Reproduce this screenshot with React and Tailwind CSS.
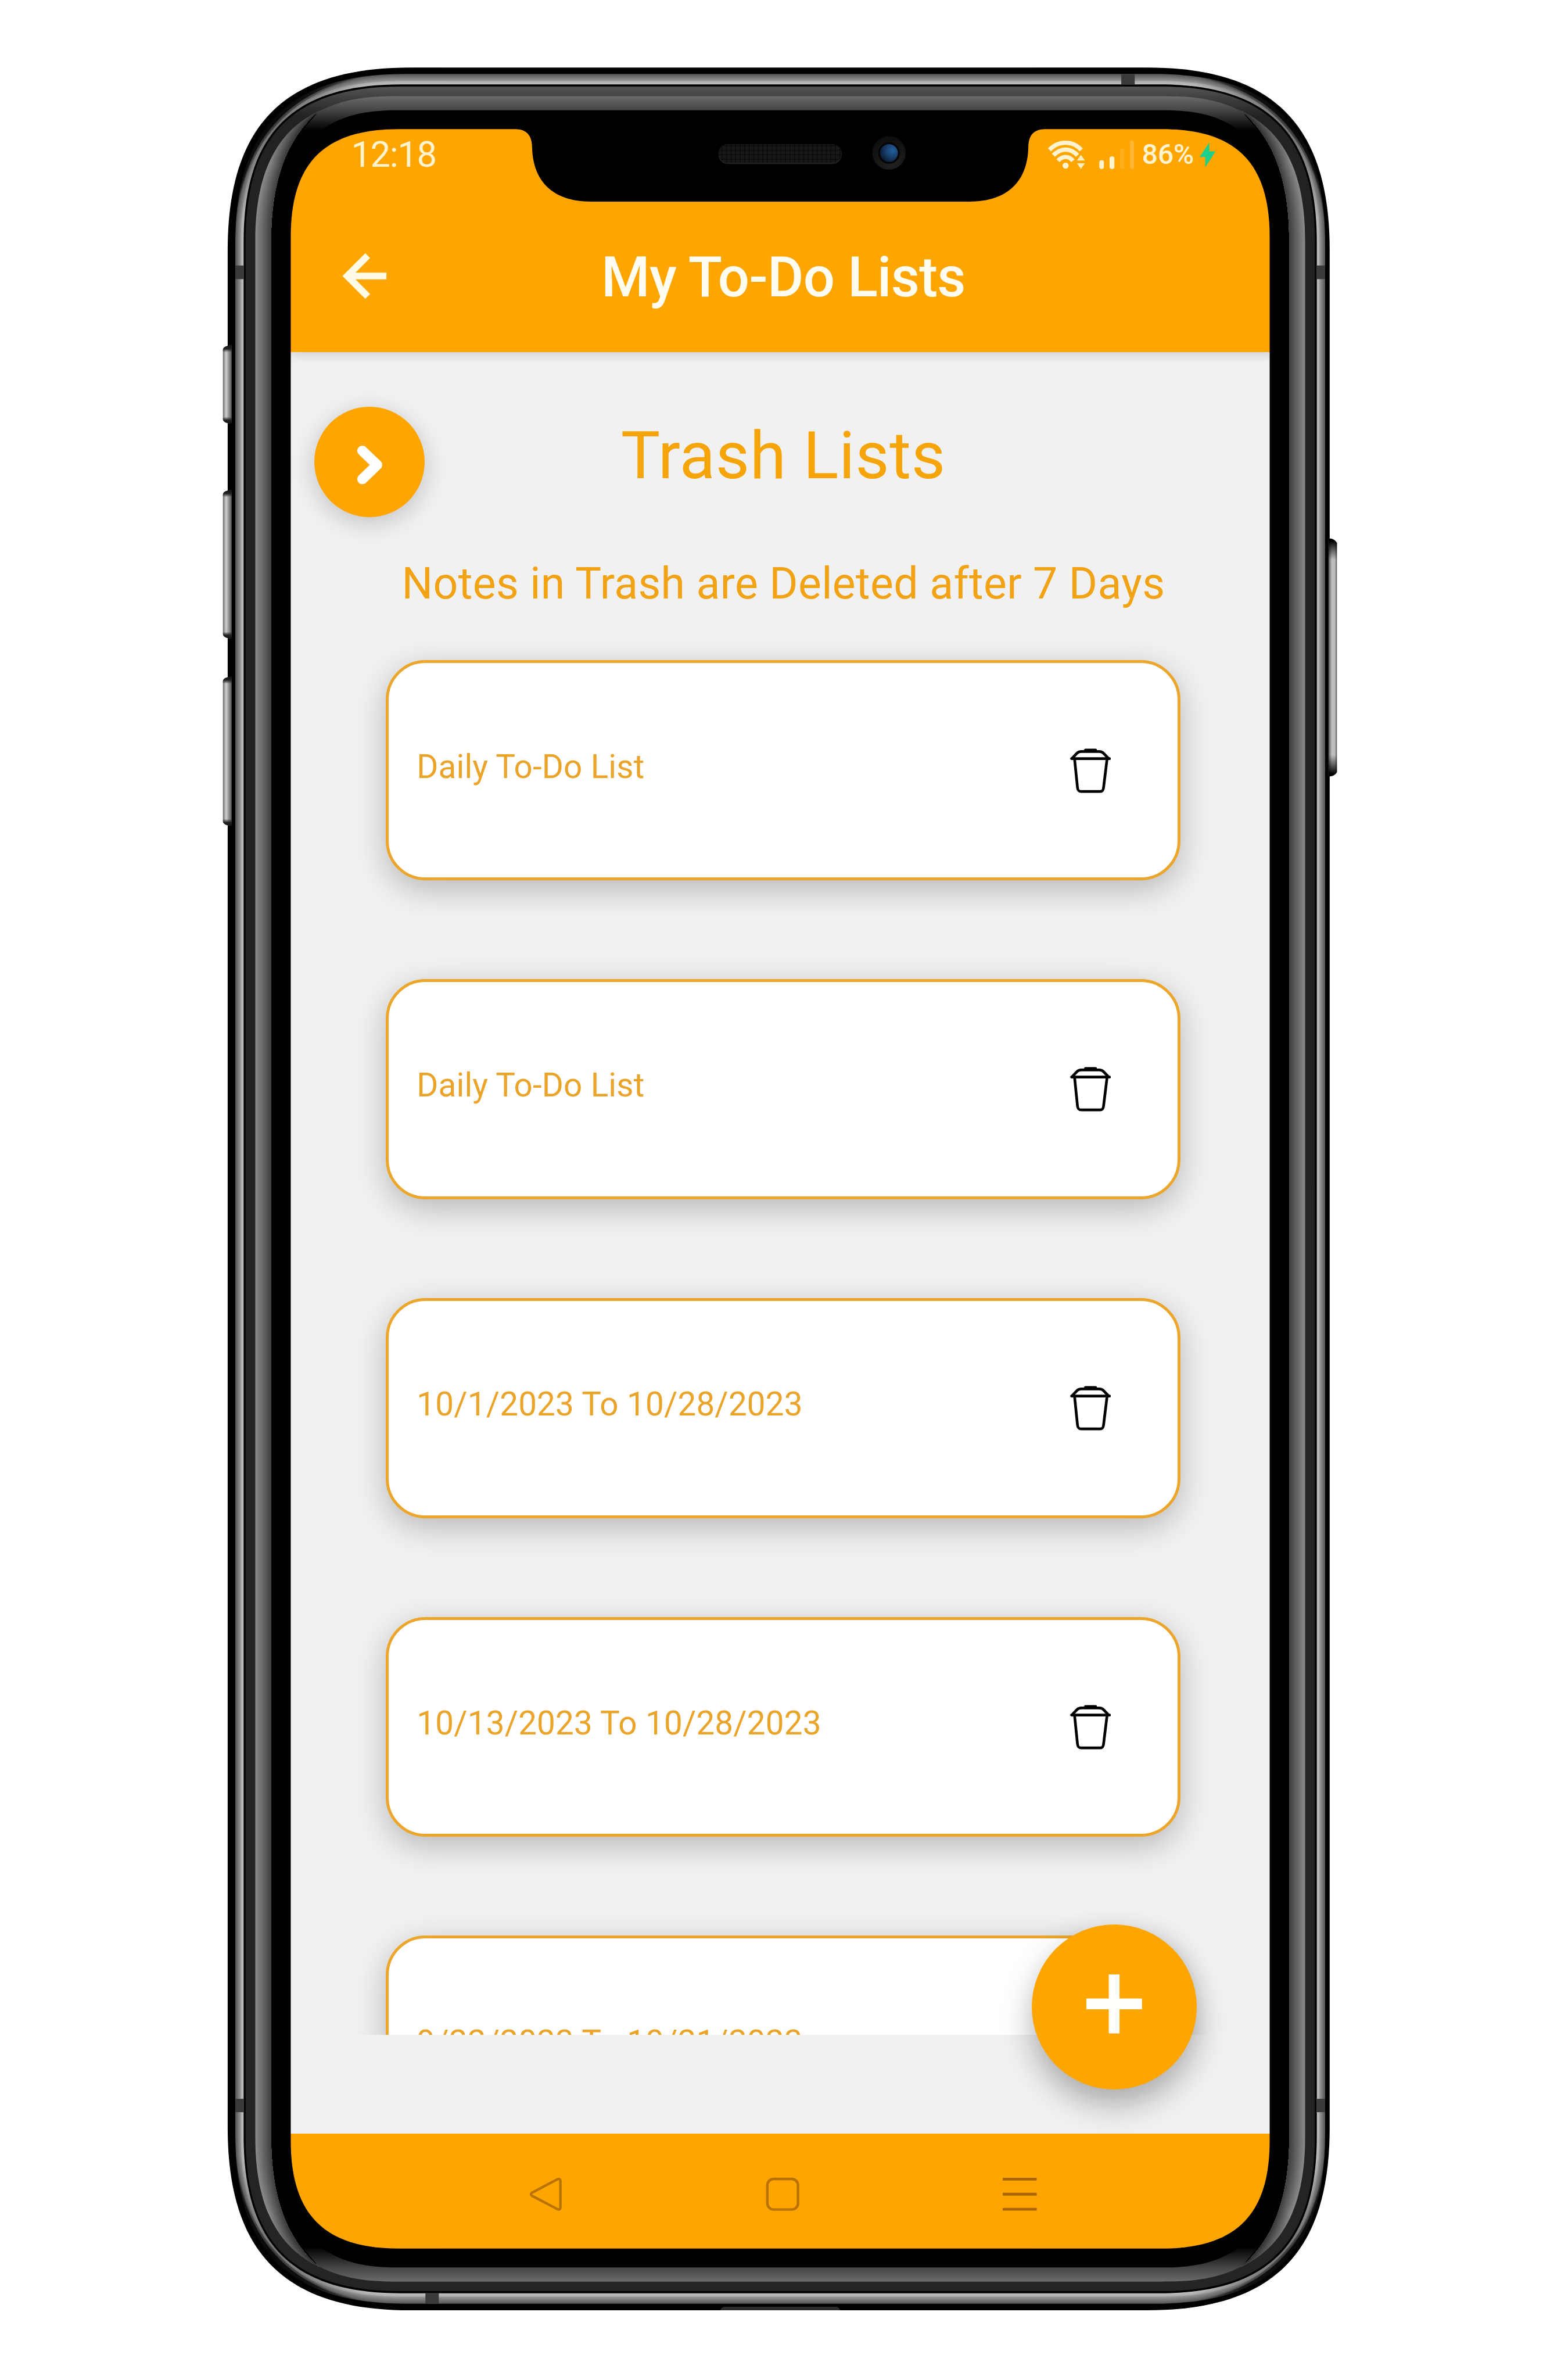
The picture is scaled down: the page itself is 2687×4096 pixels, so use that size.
import React from "react";

const LISTS = [
  "Daily To-Do List",
  "Daily To-Do List",
  "10/1/2023 To 10/28/2023",
  "10/13/2023 To 10/28/2023",
  "9/22/2023 To 10/21/2023",
];

const CX = 1375.5;
const CY = 2095.5;
const K = 0.313;

/* Quarter of a continuous-corner rectangle, closed towards the phone's centre. */
function quarter(x, y, e) {
  return `M${x} ${CY}V${y + e}C${x} ${y + e * K} ${x + e * K} ${y} ${x + e} ${y}H${CX}V${CY}Z`;
}

function rounded(l, t, r, b, e) {
  const c = e * K;
  return `M${l} ${t + e}C${l} ${t + c} ${l + c} ${t} ${l + e} ${t}H${r - e}C${r - c} ${t} ${r} ${t + c} ${r} ${t + e}V${b - e}C${r} ${b - c} ${r - c} ${b} ${r - e} ${b}H${l + e}C${l + c} ${b} ${l} ${b - c} ${l} ${b - e}Z`;
}

const mix = (a, b, t) => a + (b - a) * t;
const gray = (v) => `rgb(${Math.round(v)},${Math.round(v)},${Math.round(v)})`;

/* Edges of the side bevel: start point, two control points, and the shared tip. */
const SIDE_OUTER = [450, 424, 450, 307, 486, 232, 562, 196];
const SIDE_INNER = [478, 424, 478, 330, 500, 248, 562, 196];

function sideStrip(t) {
  const p = SIDE_OUTER.map((v, i) => mix(v, SIDE_INNER[i], t));
  const q = SIDE_INNER;
  return `M${p[0]} ${CY}V${p[1]}C${p[2]} ${p[3]} ${p[4]} ${p[5]} ${p[6]} ${p[7]}C${q[4]} ${q[5]} ${q[2]} ${q[3]} ${q[0]} ${q[1]}V${CY}Z`;
}

const STEPS = [0, 1, 2, 3, 4, 5, 6, 7, 8, 9, 10, 11];

function Quadrant({ top }) {
  return (
    <g>
      {STEPS.map((i) => {
        const t = i / 12;
        return (
          <path
            key={i}
            d={quarter(mix(414.8, 429.5, t), mix(130.4, 148.8, t), mix(300, 277, t))}
            fill={gray(t < 0.6 ? mix(88, 150, t / 0.6) : mix(168, 196, (t - 0.6) / 0.4))}
          />
        );
      })}
      <path d="M414 430.4C414 222 507 129.6 714.8 129.6C533 130.4 414.8 246 414.8 430.4Z" fill="url(#cornerSoft)" />
      <path d="M414 430.4C414 222 507 129.6 714.8 129.6C524 130.4 414.8 239 414.8 430.4Z" fill="url(#cornerShade)" />
      <path d={quarter(414.8, 130.4, 300)} fill="url(#cornerSoft)" />
      <path d={quarter(429.5, 148.8, 277)} fill="#000" />
      <path d={quarter(433, 152.5, 272)} fill={top ? "url(#rimTop)" : "#242424"} />
      <path d={quarter(450, 169.3, 255)} fill="#000" />
      <path
        d="M562 196C603.500 176 640 169.3 705 169.3H1375.5V194.3H700C640 194.3 600 205 566 230H533Z"
        fill="url(#bevelTop)"
      />
      {STEPS.map((i) => (
        <path key={i} d={sideStrip(i / 12)} fill={gray(mix(136, 66, i / 11))} />
      ))}
      <path d={sideStrip(0)} fill="url(#tipShade)" />
    </g>
  );
}

function PhoneFrame() {
  return (
    <svg
      className="pointer-events-none absolute inset-0 h-full w-full"
      viewBox="0 0 2752 4195"
      preserveAspectRatio="none"
      aria-hidden="true"
    >
      <defs>
        <linearGradient id="rimTop" gradientUnits="userSpaceOnUse" x1="0" y1="152" x2="0" y2="205">
          <stop offset="0" stopColor="#555" />
          <stop offset="0.3" stopColor="#444" />
          <stop offset="1" stopColor="#222" />
        </linearGradient>
        <linearGradient id="bevelTop" gradientUnits="userSpaceOnUse" x1="0" y1="169" x2="0" y2="230">
          <stop offset="0" stopColor="#6c6c6c" />
          <stop offset="0.42" stopColor="#444" />
          <stop offset="1" stopColor="#000" />
        </linearGradient>
        <linearGradient id="tipShade" gradientUnits="userSpaceOnUse" x1="562" y1="196" x2="480" y2="290">
          <stop offset="0" stopColor="#222" stopOpacity="0.75" />
          <stop offset="1" stopColor="#222" stopOpacity="0" />
        </linearGradient>
        <radialGradient id="cornerShade" gradientUnits="userSpaceOnUse" cx="470" cy="215" r="190">
          <stop offset="0" stopColor="#000" stopOpacity="0.8" />
          <stop offset="0.5" stopColor="#000" stopOpacity="0.7" />
          <stop offset="1" stopColor="#000" stopOpacity="0" />
        </radialGradient>
        <radialGradient id="cornerSoft" gradientUnits="userSpaceOnUse" cx="475" cy="215" r="180">
          <stop offset="0" stopColor="#000" stopOpacity="0.4" />
          <stop offset="0.5" stopColor="#000" stopOpacity="0.25" />
          <stop offset="1" stopColor="#000" stopOpacity="0" />
        </radialGradient>
        <linearGradient id="keyLeft" x1="0" y1="0" x2="1" y2="0">
          <stop offset="0" stopColor="#666" />
          <stop offset="0.35" stopColor="#d0d0d0" />
          <stop offset="0.6" stopColor="#a0a0a0" />
          <stop offset="1" stopColor="#555" />
        </linearGradient>
        <linearGradient id="keyRight" x1="0" y1="0" x2="1" y2="0">
          <stop offset="0" stopColor="#555" />
          <stop offset="0.4" stopColor="#bdbdbd" />
          <stop offset="0.75" stopColor="#bdbdbd" />
          <stop offset="1" stopColor="#555" />
        </linearGradient>
        <linearGradient id="keyRightEnds" x1="0" y1="0" x2="0" y2="1">
          <stop offset="0.01" stopColor="#000" />
          <stop offset="0.09" stopColor="#000" stopOpacity="0" />
          <stop offset="0.91" stopColor="#000" stopOpacity="0" />
          <stop offset="0.99" stopColor="#000" />
        </linearGradient>
        <linearGradient id="keyCapTop" x1="0" y1="0" x2="0" y2="1">
          <stop offset="0" stopColor="#111" />
          <stop offset="0.5" stopColor="#222" />
          <stop offset="1" stopColor="#222" stopOpacity="0" />
        </linearGradient>
        <linearGradient id="keyCapBottom" x1="0" y1="1" x2="0" y2="0">
          <stop offset="0" stopColor="#111" />
          <stop offset="0.5" stopColor="#222" />
          <stop offset="1" stopColor="#222" stopOpacity="0" />
        </linearGradient>
        <pattern id="mesh" width="8" height="8" patternUnits="userSpaceOnUse">
          <rect width="8" height="8" fill="#181818" />
          <path d="M0 0H8M0 0V8" stroke="#0a0a0a" strokeWidth="3" />
        </pattern>
        <radialGradient id="lensRing" cx="0.6" cy="0.8" r="0.8">
          <stop offset="0" stopColor="#222" />
          <stop offset="1" stopColor="#0d0d0d" />
        </radialGradient>
        <radialGradient id="lens" cx="0.72" cy="0.35" r="0.75">
          <stop offset="0" stopColor="#245f9e" />
          <stop offset="0.45" stopColor="#1b4473" />
          <stop offset="1" stopColor="#0b1a33" />
        </radialGradient>
        <mask id="screenHole">
          <rect width="2752" height="4195" fill="#fff" />
          <path d={rounded(512.6, 227.5, 2238.4, 3963.3, 190)} fill="#000" />
        </mask>
      </defs>

      <g mask="url(#screenHole)">
        <path d={rounded(401.4, 119, 2344.2, 4072.2, 322)} fill="#000" />
        <Quadrant top />
        <g transform={`translate(${CX * 2} 0) scale(-1 1)`}>
          <Quadrant top />
        </g>
        <g transform={`translate(0 ${CY * 2}) scale(1 -1)`}>
          <Quadrant />
        </g>
        <g transform={`translate(${CX * 2} ${CY * 2}) scale(-1 -1)`}>
          <Quadrant />
        </g>
      </g>

      <g fill="#3a3a3a">
        <rect x="1976.8" y="130.4" width="23.7" height="18.4" />
        <rect x="750" y="4042.4" width="23.6" height="18.4" />
        <rect x="414.8" y="468" width="14.7" height="24" />
        <rect x="2321.5" y="468" width="14.7" height="24" />
        <rect x="414.8" y="3699.5" width="14.7" height="23.5" />
        <rect x="2321.5" y="3699.5" width="14.7" height="23.5" />
      </g>
      <path d="M1270 4072.2C1271 4068 1274 4066 1280 4066H1471C1477 4066 1480 4068 1481 4072.2Z" fill="#2c2c2c" />

      {[
        [608.8, 746.6],
        [864, 1125.5],
        [1193, 1455.5],
      ].map(([a, b]) => (
        <g key={a}>
          <path d={`M408.5 ${a}C399 ${a} 393 ${a + 3} 393 ${a + 8}V${b - 8}C393 ${b - 3} 399 ${b} 408.5 ${b}Z`} fill="url(#keyLeft)" />
          <path d={`M408.5 ${a}C399 ${a} 393 ${a + 3} 393 ${a + 8}V${a + 12}H408.5Z`} fill="url(#keyCapTop)" />
          <path d={`M408.5 ${b}C399 ${b} 393 ${b - 3} 393 ${b - 8}V${b - 12}H408.5Z`} fill="url(#keyCapBottom)" />
        </g>
      ))}
      <path d="M2342 948.8C2350 948.8 2354 952 2357 957V1361C2354 1366 2350 1368.7 2342 1368.7Z" fill="url(#keyRight)" />
      <path d="M2342 948.8C2350 948.8 2354 952 2357 957V1361C2354 1366 2350 1368.7 2342 1368.7Z" fill="url(#keyRightEnds)" />

      <path
        d="M911 225V227.5C928 228.5 937 238 938 257C938.5 318 973 355.3 1042 355.3H1709C1778 355.3 1812.5 318 1813 257C1814 238 1823 228.5 1840 227.5V225Z"
        fill="#000"
      />
      <rect x="1266.8" y="255" width="217" height="34" rx="16" fill="#242424" />
      <rect x="1266.8" y="254" width="217" height="33" rx="16" fill="url(#mesh)" />
      <circle cx="1567.2" cy="269.5" r="29.5" fill="url(#lensRing)" />
      <circle cx="1567.2" cy="269.7" r="19" fill="#040404" />
      <circle cx="1567.2" cy="269.7" r="15.8" fill="url(#lens)" />
    </svg>
  );
}

function StatusIcons() {
  return (
    <svg className="h-[52px] w-[152px]" viewBox="1846 247 152 52" fill="none" aria-hidden="true">
      <g stroke="#fff4cf" strokeWidth="7.5">
        <path d="M1848.5 264.5C1864 247.5 1890 247.5 1904.5 264.5" />
        <path d="M1855.5 274C1868 260.5 1886 260.5 1898 274" />
        <path d="M1863.5 283.5C1871.5 274.5 1882.5 274.5 1890 283.5" />
      </g>
      <circle cx="1877" cy="292" r="5.4" fill="#fff4cf" />
      <path d="M1904 273L1911 283H1897ZM1904 298L1911 288H1897Z" fill="#fff0bf" />
      <rect x="1936.5" y="282.5" width="8" height="15.5" rx="3.5" fill="#fff4cf" />
      <rect x="1954.5" y="276" width="8.5" height="22" rx="3.5" fill="#fff4cf" />
      <rect x="1973" y="262" width="7" height="36" rx="3" fill="#ffae20" />
      <rect x="1990.5" y="248" width="7" height="50" rx="3" fill="#ffb638" />
    </svg>
  );
}

function StatusBar() {
  return (
    <div className="flex h-[92px] items-center justify-between pl-[107px] pr-[106px]">
      <span className="text-[63px] leading-none tracking-[-1.4px] text-[#fff4cf]">12:18</span>
      <div className="flex items-center">
        <StatusIcons />
        <span className="ml-[14px] text-[49px] font-medium leading-none text-[#fff4cf]">86%</span>
        <svg className="ml-[9px] h-[46px] w-[30px]" viewBox="0 0 30 46" aria-hidden="true">
          <path d="M18 1L1 27H11L11 45L29 17H18Z" fill="#1fd08c" />
        </svg>
      </div>
    </div>
  );
}

function Header() {
  return (
    <header className="relative z-10 h-[394px] shrink-0 bg-[#ffa500] shadow-[0_5px_18px_rgba(20,20,50,0.16)]">
      <StatusBar />
      <div className="grid h-[302px] grid-cols-[1fr_auto_1fr] items-center pl-[90px] pr-[90px] pt-[38px]">
        <svg className="-mt-[4px] h-[84px] w-[84px]" viewBox="0 0 84 84" fill="none" stroke="#fffbe6" strokeWidth="12" aria-hidden="true">
          <path d="M79 42H10M46 6L10 42L46 78" />
        </svg>
        <h1 className="whitespace-nowrap text-[98px] font-medium leading-none tracking-[-0.8px] text-[#fffdf2]">My To-Do Lists</h1>
      </div>
    </header>
  );
}

function TrashIcon() {
  return (
    <svg className="mt-[2px] h-[80px] w-[72px]" viewBox="0 0 72 80" fill="none" stroke="#000" strokeWidth="4.8" strokeLinecap="round" strokeLinejoin="round" aria-hidden="true">
      <path d="M27 3H45" />
      <path d="M4 17L12 8.5Q15 5.500 20 5.500H51Q56 5.500 59 8.500L67 17" />
      <path d="M2.500 18H69.500" />
      <path d="M8 20L13 69C13.500 74 15 76 20 76H53C57 76 58.500 74 59 69L65 20" />
    </svg>
  );
}

function ListCard({ label }) {
  return (
    <li className="flex h-[388px] w-[1401px] shrink-0 items-center justify-between rounded-[70px] border-[6px] border-[#eca62b] bg-white pl-[49px] pr-[118px] shadow-[0_16px_56px_rgba(0,0,0,0.24)]">
      <span className="-mt-[12px] whitespace-nowrap text-[58px] leading-none tracking-[0.15px] text-[#eba42a]">{label}</span>
      <TrashIcon />
    </li>
  );
}

function Fab() {
  return (
    <button className="absolute left-[1307px] top-[3165px] flex h-[291px] w-[291px] items-center justify-center rounded-full bg-[#ffa500] shadow-[0_26px_56px_rgba(0,0,0,0.3)]" aria-label="Add list">
      <svg className="-mt-[10px] h-[104px] w-[98px]" viewBox="0 0 98 104" stroke="#fffffb" strokeWidth="19" aria-hidden="true">
        <path d="M0 52H98M49 0V104" />
      </svg>
    </button>
  );
}

function Main() {
  return (
    <main className="flex h-[2966px] shrink-0 flex-col overflow-hidden bg-[#f1f1f1] pt-[96px]">
      <div className="grid grid-cols-[1fr_auto_1fr] items-center pl-[42px] pr-[42px]">
        <button className="flex h-[195px] w-[195px] items-center justify-center rounded-full bg-[#ffa500] shadow-[0_10px_44px_rgba(0,0,0,0.2)]" aria-label="Open menu">
          <svg className="mt-[10px] h-[72px] w-[50px]" viewBox="0 0 50 72" fill="none" stroke="#fff" strokeWidth="18" strokeLinecap="round" strokeLinejoin="round" aria-hidden="true">
            <path d="M12 11L38 36L12 61" />
          </svg>
        </button>
        <h2 className="whitespace-nowrap pb-[22px] text-[116px] leading-none tracking-[0.6px] text-[#f5a40a]">Trash Lists</h2>
      </div>
      <p className="mt-[72px] whitespace-nowrap text-center text-[77px] leading-[90px] tracking-[0.4px] text-[#f2a215]">
        Notes in Trash are Deleted after 7 Days
      </p>
      <ul className="mt-[90px] flex flex-col items-center gap-[174px]">
        {LISTS.map((label, i) => (
          <ListCard key={i} label={label} />
        ))}
      </ul>
    </main>
  );
}

function NavBar() {
  return (
    <nav className="flex h-[204px] shrink-0 items-center bg-[#ffa500] pl-[421px] pt-[10px]">
      <svg className="h-[60px] w-[58px]" viewBox="0 0 58 60" fill="none" stroke="#b97205" strokeWidth="4.5" strokeLinejoin="round" aria-hidden="true">
        <path d="M50 3.500L4.500 27.500Q1.500 30 4.500 32.500L50 56.500Q55 58 55 52.500V7.500Q55 2 50 3.500Z" />
      </svg>
      <svg className="ml-[359px] h-[60px] w-[60px]" viewBox="0 0 60 60" fill="none" stroke="#b97205" strokeWidth="4.5" aria-hidden="true">
        <rect x="3" y="3" width="54" height="54" rx="11" />
      </svg>
      <svg className="ml-[358px] h-[60px] w-[60px]" viewBox="0 0 60 60" stroke="#a86604" strokeWidth="5" aria-hidden="true">
        <path d="M0 3.500H60M0 30H60M0 56.500H60" />
      </svg>
    </nav>
  );
}

export default function App() {
  return (
    <div className="h-[4096px] w-[2687px] overflow-hidden bg-white font-['Roboto',sans-serif]">
      <div className="relative h-[4195px] w-[2752px] pl-[512px] pt-[227px] [zoom:0.97638]">
        <div className="relative isolate flex h-[3738px] w-[1738px] flex-col overflow-hidden bg-[#f1f1f1]">
          <Header />
          <Main />
          <div className="h-[174px] shrink-0" />
          <NavBar />
          <Fab />
        </div>
        <PhoneFrame />
      </div>
    </div>
  );
}
